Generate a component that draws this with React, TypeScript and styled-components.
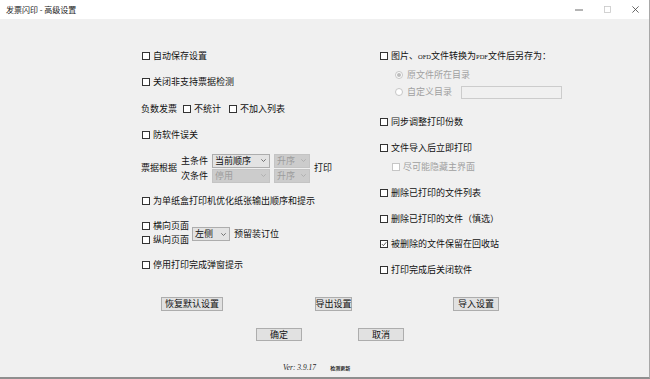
import React from "react";
import styled, { createGlobalStyle } from "styled-components";

const Global = createGlobalStyle`
  html, body { margin: 0; padding: 0; }
  body {
    width: 650px; height: 379px; overflow: hidden; background: #f0f0f0;
    font-family: "Noto Sans CJK SC", "Noto Sans", sans-serif; font-size: 9px; color: #111;
  }
`;

const Window = styled.div`
  width: 650px; height: 379px; box-sizing: border-box;
  background: #f0f0f0;
  border-right: 1px solid #a8a8a8;
  border-bottom: 2px solid #8f8f8f;
  display: flex; flex-direction: column;
`;

const TitleBar = styled.div`
  height: 19px; flex-shrink: 0; background: #fff;
  display: flex; align-items: center; padding-left: 6px;
`;

const Title = styled.div`
  flex: 1; font-size: 8px; line-height: 19px; color: #1a1a1a;
`;

const CtrlBtn = styled.div`
  width: 28px; height: 19px;
  display: flex; align-items: center; justify-content: center;
`;

const Columns = styled.div`
  display: flex; padding-left: 141px;
`;

const Column = styled.div<{ $w?: number }>`
  display: flex; flex-direction: column;
  width: ${(p) => (p.$w ? `${p.$w}px` : "auto")};
`;

const Row = styled.div<{ $mt?: number; $indent?: number }>`
  display: flex; align-items: center; height: 14px; white-space: nowrap;
  margin-top: ${(p) => p.$mt ?? 0}px;
  padding-left: ${(p) => p.$indent ?? 0}px;
`;

const Label = styled.span<{ $ml?: number; $mt?: number; $disabled?: boolean }>`
  line-height: 14px; white-space: nowrap;
  margin-left: ${(p) => p.$ml ?? 0}px;
  margin-top: ${(p) => p.$mt ?? 0}px;
  color: ${(p) => (p.$disabled ? "#a0a0a0" : "#111")};
`;

const Latin = styled.span`
  font-family: "Liberation Serif", serif; font-size: 6.5px;
`;

const Box = styled.span<{ $disabled?: boolean; $ml?: number }>`
  width: 8px; height: 8px; box-sizing: border-box; flex-shrink: 0;
  border: 1px solid ${(p) => (p.$disabled ? "#c6c6c6" : "#333")};
  background: #fff;
  margin-left: ${(p) => p.$ml ?? 1}px; margin-right: 3px;
  display: inline-flex; align-items: center; justify-content: center;
`;

const RadioDot = styled.span<{ $on?: boolean }>`
  width: 8px; height: 8px; box-sizing: border-box; flex-shrink: 0; border-radius: 50%;
  border: 1px solid #c6c6c6; background: #fff; margin-right: 4px;
  display: inline-flex; align-items: center; justify-content: center;
  &::after {
    content: ""; width: 4px; height: 4px; border-radius: 50%;
    background: ${(p) => (p.$on ? "#bcbcbc" : "transparent")};
  }
`;

const SelectBox = styled.div<{ $w: number; $disabled?: boolean; $mt?: number; $ml?: number }>`
  width: ${(p) => p.$w}px; height: 14px; box-sizing: border-box;
  margin-top: ${(p) => p.$mt ?? 0}px; margin-left: ${(p) => p.$ml ?? 0}px;
  border: 1px solid ${(p) => (p.$disabled ? "#c4c4c4" : "#adadad")};
  background: ${(p) => (p.$disabled ? "#cccccc" : "#e3e3e3")};
  color: ${(p) => (p.$disabled ? "#9c9c9c" : "#111")};
  display: flex; align-items: center; justify-content: space-between;
  padding: 0 3px 0 2px; line-height: 12px; white-space: nowrap;
`;

const TextInput = styled.div`
  width: 101px; height: 13px; box-sizing: border-box; margin-left: 9px;
  border: 1px solid #cccccc; background: #f0f0f0;
`;

const SortGroup = styled.div`
  display: flex; align-items: center; height: 30px; margin-top: 11px;
`;

const SortGrid = styled.div`
  display: grid; grid-template-columns: auto auto auto;
  grid-template-rows: 14px 14px; row-gap: 1px; column-gap: 4px;
  align-items: center; margin-left: 4px;
`;

const BindGroup = styled.div`
  display: flex; align-items: center; margin-top: 11px;
`;

const ButtonRow = styled.div<{ $mt: number; $pl: number }>`
  display: flex; margin-top: ${(p) => p.$mt}px; padding-left: ${(p) => p.$pl}px;
`;

const Button = styled.div<{ $w: number; $h?: number; $ml?: number }>`
  width: ${(p) => p.$w}px; height: ${(p) => p.$h ?? 14}px; box-sizing: border-box;
  margin-left: ${(p) => p.$ml ?? 0}px;
  border: 1px solid #adadad; background: #e1e1e1;
  display: flex; align-items: center; justify-content: center;
  line-height: 12px; white-space: nowrap;
`;

const Footer = styled.div`
  display: flex; align-items: center; height: 12px; margin-top: 20px; padding-left: 283px;
`;

const Version = styled.span`
  font-family: "Liberation Serif", serif; font-style: italic; font-size: 7.5px; color: #222;
`;

const Update = styled.span`
  font-size: 5px; font-weight: 700; color: #2a2a2a; margin-left: 14px;
`;

const Chevron = ({ color }: { color: string }) => (
  <svg width="5" height="3" viewBox="0 0 5 3">
    <path d="M0.3 0.3 L2.5 2.5 L4.7 0.3" fill="none" stroke={color} strokeWidth="0.8" />
  </svg>
);

const Select = ({ w, text, disabled, mt, ml }: { w: number; text: string; disabled?: boolean; mt?: number; ml?: number }) => (
  <SelectBox $w={w} $disabled={disabled} $mt={mt} $ml={ml}>
    <span>{text}</span>
    <Chevron color={disabled ? "#a8a8a8" : "#555"} />
  </SelectBox>
);

const Check = ({ checked, disabled, ml }: { checked?: boolean; disabled?: boolean; ml?: number }) => (
  <Box $disabled={disabled} $ml={ml}>
    {checked && (
      <svg width="6" height="6" viewBox="0 0 6 6">
        <path d="M0.8 3 L2.4 4.6 L5.3 1.2" fill="none" stroke="#333" strokeWidth="0.8" />
      </svg>
    )}
  </Box>
);

const CheckRow = ({ text, mt, indent, checked, disabled }: { text: React.ReactNode; mt?: number; indent?: number; checked?: boolean; disabled?: boolean }) => (
  <Row $mt={mt} $indent={indent}>
    <Check checked={checked} disabled={disabled} />
    <Label $disabled={disabled}>{text}</Label>
  </Row>
);

export default function App() {
  return (
    <>
      <Global />
      <Window>
        <TitleBar>
          <Title>发票闪印 - 高级设置</Title>
          <CtrlBtn>
            <svg width="9" height="2" viewBox="0 0 9 2">
              <path d="M0 1 H8" stroke="#444" strokeWidth="0.8" />
            </svg>
          </CtrlBtn>
          <CtrlBtn>
            <svg width="7" height="7" viewBox="0 0 7 7">
              <rect x="0.5" y="0.5" width="6" height="6" fill="none" stroke="#c8c8c8" strokeWidth="0.8" />
            </svg>
          </CtrlBtn>
          <CtrlBtn>
            <svg width="7" height="7" viewBox="0 0 7 7">
              <path d="M0.4 0.4 L6.6 6.6 M6.6 0.4 L0.4 6.6" stroke="#444" strokeWidth="0.8" />
            </svg>
          </CtrlBtn>
        </TitleBar>

        <Columns>
          <Column $w={238}>
            <CheckRow mt={30} text="自动保存设置" />
            <CheckRow mt={12} text="关闭非支持票据检测" />
            <Row $mt={13}>
              <Label>负数发票</Label>
              <Check ml={6} />
              <Label>不统计</Label>
              <Check ml={8} />
              <Label>不加入列表</Label>
            </Row>
            <CheckRow mt={12} text="防软件误关" />
            <SortGroup>
              <Label>票据根据</Label>
              <SortGrid>
                <Label>主条件</Label>
                <Select w={58} text="当前顺序" />
                <Select w={36} text="升序" disabled />
                <Label>次条件</Label>
                <Select w={58} text="停用" disabled />
                <Select w={36} text="升序" disabled />
              </SortGrid>
              <Label $ml={4}>打印</Label>
            </SortGroup>
            <CheckRow mt={11} text="为单纸盒打印机优化纸张输出顺序和提示" />
            <BindGroup>
              <Column>
                <CheckRow text="横向页面" />
                <CheckRow text="纵向页面" />
              </Column>
              <Select w={38} text="左侧" ml={3} mt={2} />
              <Label $ml={4} $mt={2}>预留装订位</Label>
            </BindGroup>
            <CheckRow mt={11} text="停用打印完成弹窗提示" />
          </Column>

          <Column>
            <CheckRow
              mt={30}
              text={
                <>
                  图片、<Latin>OFD</Latin>文件转换为<Latin>PDF</Latin>文件后另存为：
                </>
              }
            />
            <Row $mt={5} $indent={16}>
              <RadioDot $on />
              <Label $disabled>原文件所在目录</Label>
            </Row>
            <Row $mt={3} $indent={16}>
              <RadioDot />
              <Label $disabled>自定义目录</Label>
              <TextInput />
            </Row>
            <CheckRow mt={16} text="同步调整打印份数" />
            <CheckRow mt={12} text="文件导入后立即打印" />
            <CheckRow mt={5} indent={12} text="尽可能隐藏主界面" disabled />
            <CheckRow mt={12} text="删除已打印的文件列表" />
            <CheckRow mt={12} text="删除已打印的文件（慎选）" />
            <CheckRow mt={11} text="被删除的文件保留在回收站" checked />
            <CheckRow mt={12} text="打印完成后关闭软件" />
          </Column>
        </Columns>

        <ButtonRow $mt={20} $pl={161}>
          <Button $w={62}>恢复默认设置</Button>
          <Button $w={37} $ml={92}>导出设置</Button>
          <Button $w={46} $ml={101}>导入设置</Button>
        </ButtonRow>
        <ButtonRow $mt={17} $pl={256}>
          <Button $w={46} $h={13}>确定</Button>
          <Button $w={46} $h={13} $ml={56}>取消</Button>
        </ButtonRow>
        <Footer>
          <Version>Ver: 3.9.17</Version>
          <Update>检测更新</Update>
        </Footer>
      </Window>
    </>
  );
}
